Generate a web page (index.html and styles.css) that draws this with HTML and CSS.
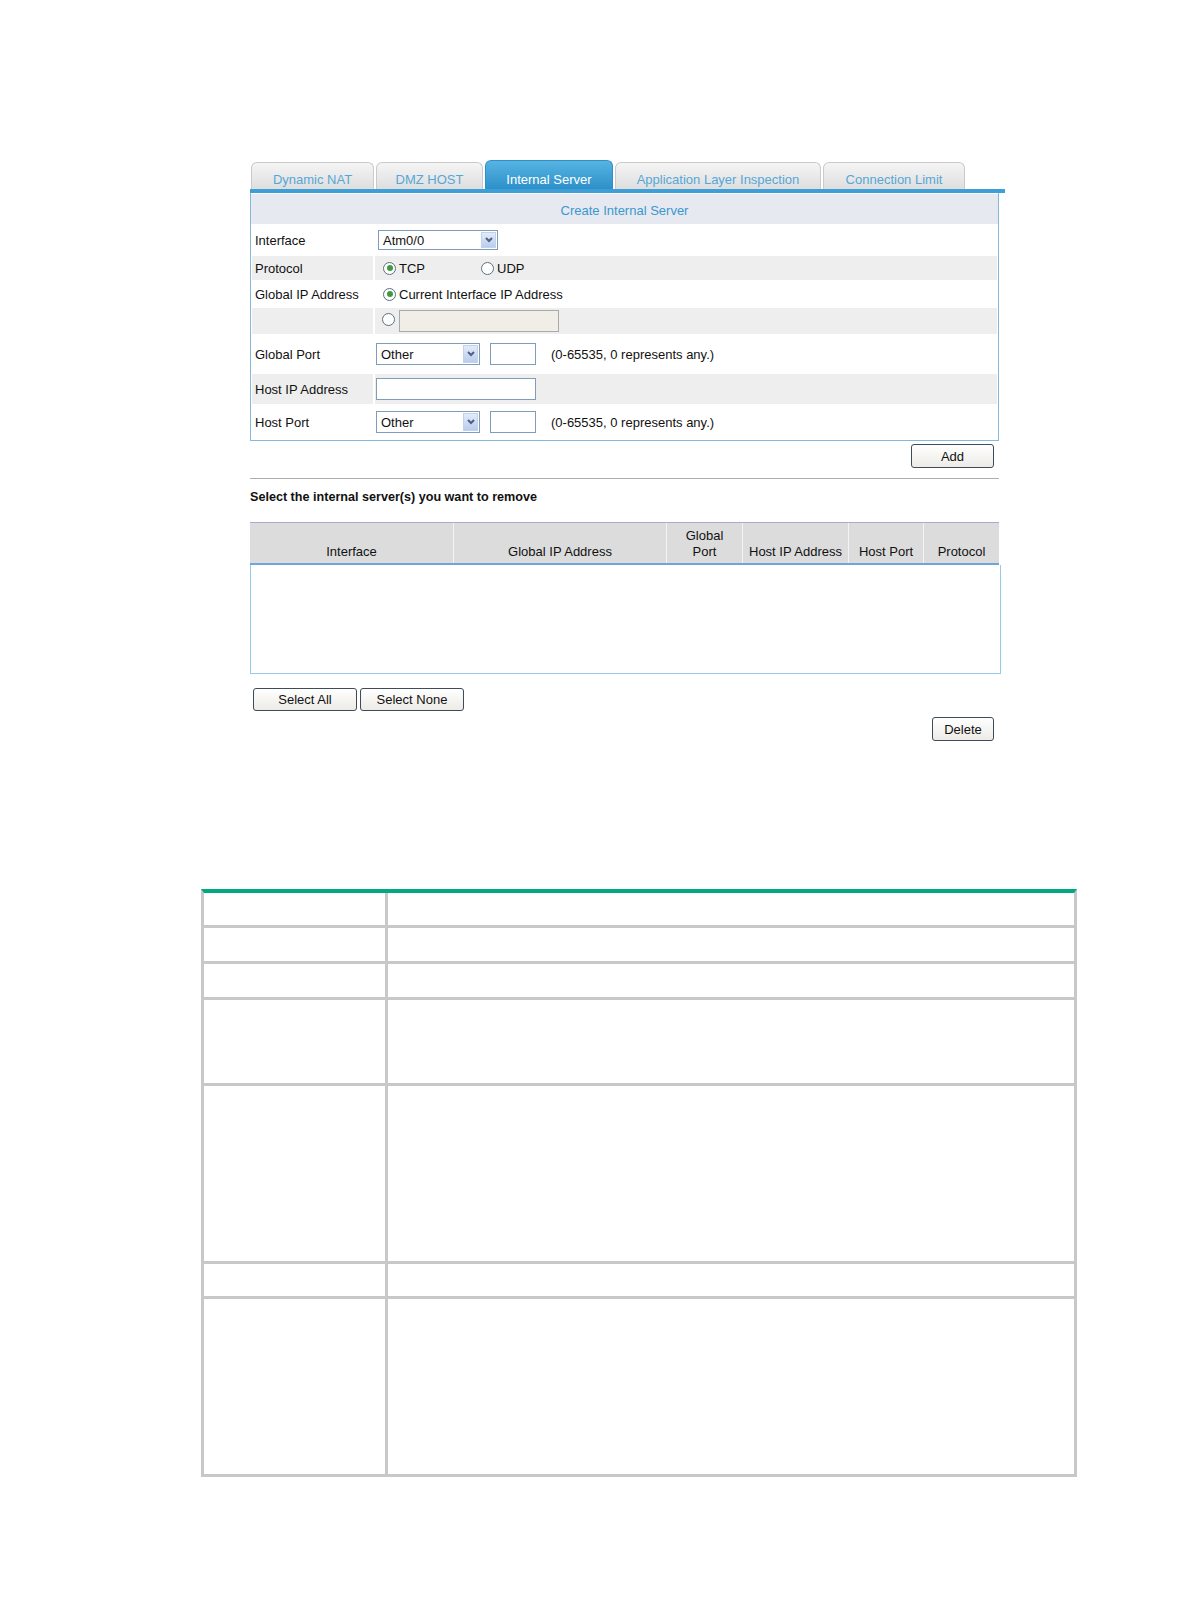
FILE: index.html
```html
<!DOCTYPE html>
<html lang="en">
<head>
    <meta charset="UTF-8">
    <title>Internal Server</title>
    <link rel="stylesheet" href="styles.css">
</head>
<body>
    <div class="nat">
        <div class="tabs">
            <div class="tab t1">Dynamic NAT</div>
            <div class="tab t2">DMZ HOST</div>
            <div class="tab t3 active">Internal Server</div>
            <div class="tab t4">Application Layer Inspection</div>
            <div class="tab t5">Connection Limit</div>
        </div>

        <div class="panel">
            <div class="panel-title">Create Internal Server</div>
            <div class="form">
                <div class="lbl">Interface</div>
                <div class="val">
                    <span class="select sel-if">Atm0/0<i class="arrow"><svg viewBox="0 0 8 6" width="8" height="6"><polyline points="1,1 4,4 7,1" /></svg></i></span>
                </div>

                <div class="lbl alt">Protocol</div>
                <div class="val alt">
                    <span class="opt proto"><span class="radio on"></span>TCP</span>
                    <span class="opt"><span class="radio"></span>UDP</span>
                </div>

                <div class="lbl">Global IP Address</div>
                <div class="val">
                    <span class="opt current"><span class="radio on"></span>Current Interface IP Address</span>
                </div>

                <div class="lbl alt"></div>
                <div class="val alt">
                    <span class="opt other"><span class="radio"></span><span class="field disabled"></span></span>
                </div>

                <div class="lbl">Global Port</div>
                <div class="val">
                    <span class="select sel-port">Other<i class="arrow"><svg viewBox="0 0 8 6" width="8" height="6"><polyline points="1,1 4,4 7,1" /></svg></i></span>
                    <span class="field port"></span>
                    <span class="hint">(0-65535, 0 represents any.)</span>
                </div>

                <div class="lbl alt">Host IP Address</div>
                <div class="val alt">
                    <span class="field host"></span>
                </div>

                <div class="lbl">Host Port</div>
                <div class="val">
                    <span class="select sel-port">Other<i class="arrow"><svg viewBox="0 0 8 6" width="8" height="6"><polyline points="1,1 4,4 7,1" /></svg></i></span>
                    <span class="field port"></span>
                    <span class="hint">(0-65535, 0 represents any.)</span>
                </div>
            </div>
        </div>

        <div class="actions">
            <button class="btn add">Add</button>
        </div>

        <div class="divider"></div>
        <div class="caption">Select the internal server(s) you want to remove</div>

        <div class="list-head">
            <div class="col c1">Interface</div>
            <div class="col c2">Global IP Address</div>
            <div class="col c3">Global<br>Port</div>
            <div class="col c4">Host IP Address</div>
            <div class="col c5">Host Port</div>
            <div class="col c6">Protocol</div>
        </div>
        <div class="list-body"></div>

        <div class="select-btns">
            <button class="btn wide">Select All</button>
            <button class="btn wide">Select None</button>
        </div>

        <div class="actions delete-row">
            <button class="btn del">Delete</button>
        </div>
    </div>

    <div class="spec">
        <div class="cell key r1"></div><div class="cell r1"></div>
        <div class="cell key r2"></div><div class="cell r2"></div>
        <div class="cell key r2"></div><div class="cell r2"></div>
        <div class="cell key r4"></div><div class="cell r4"></div>
        <div class="cell key r5"></div><div class="cell r5"></div>
        <div class="cell key r1"></div><div class="cell r1"></div>
        <div class="cell key r5"></div><div class="cell r5"></div>
    </div>
</body>
</html>
```

FILE: styles.css
```css
body {
    margin: 0;
    background: #fff;
    font-family: "Liberation Sans", Arial, sans-serif;
    font-size: 13px;
    color: #111;
}

.nat {
    margin: 160px 0 0 250px;
    width: 755px;
}

/* tabs */

.tabs {
    display: flex;
    align-items: flex-end;
    gap: 2px;
    height: 29px;
    padding-left: 1px;
    border-bottom: 4px solid #3d9fd6;
}

.tab {
    height: 26px;
    line-height: 34px;
    text-align: center;
    color: #55a7d9;
    background: linear-gradient(#f5f5f5, #dedede);
    border: 1px solid #cacaca;
    border-bottom: none;
    border-radius: 6px 6px 0 0;
    overflow: hidden;
}

.tab.active {
    height: 28px;
    line-height: 38px;
    color: #fff;
    background: linear-gradient(#56b4e2, #2d90c9);
    border-color: #2f8fc6;
}

.t1 { width: 121px; }
.t2 { width: 105px; }
.t3 { width: 126px; }
.t4 { width: 204px; }
.t5 { width: 140px; }

/* create panel */

.panel {
    width: 747px;
    padding-top: 1px;
    border: 1px solid #86b8da;
    border-top: none;
}

.panel-title {
    height: 30px;
    line-height: 34px;
    text-align: center;
    color: #3b98cf;
    background: #e6e9ef;
    overflow: hidden;
}

.form {
    display: grid;
    grid-template-columns: 121px 1fr;
    grid-template-rows: 32px 24px 28px 26px 40px 30px 36px;
    column-gap: 2px;
    padding: 0 1px;
}

.lbl,
.val {
    display: flex;
    align-items: center;
}

.lbl {
    padding-left: 3px;
}

.val {
    padding-left: 1px;
}

.alt {
    background: #eeeeee;
}

.opt {
    display: inline-flex;
    align-items: center;
    gap: 3px;
    white-space: nowrap;
}

.opt.proto {
    width: 98px;
    margin-left: 7px;
}

.opt.current {
    margin-left: 7px;
}

.opt.other {
    margin-left: 6px;
    gap: 4px;
}

.opt.other .radio {
    margin-bottom: 3px;
}

.radio {
    flex-shrink: 0;
    width: 11px;
    height: 11px;
    border: 1px solid #5d6f80;
    border-radius: 50%;
    background: #fff;
    position: relative;
}

.radio.on::after {
    content: "";
    position: absolute;
    left: 2.5px;
    top: 2.5px;
    width: 6px;
    height: 6px;
    border-radius: 50%;
    background: #3f9a3f;
}

.select {
    position: relative;
    display: inline-block;
    height: 20px;
    line-height: 20px;
    padding-left: 4px;
    border: 1px solid #7f9db9;
    background: #fff;
    box-sizing: border-box;
}

.sel-if {
    width: 120px;
    margin-left: 2px;
}

.sel-port {
    width: 104px;
    height: 22px;
    line-height: 22px;
}

.arrow {
    position: absolute;
    right: 1px;
    top: 1px;
    bottom: 1px;
    width: 15px;
    display: flex;
    align-items: center;
    justify-content: center;
    background: linear-gradient(#e3ebf8, #b9cdee);
    border: 1px solid #c2d2ee;
    box-sizing: border-box;
}

.arrow svg {
    fill: none;
    stroke: #4d6185;
    stroke-width: 2;
}

.field {
    display: inline-block;
    height: 22px;
    border: 1px solid #7f9db9;
    background: #fff;
    box-sizing: border-box;
}

.field.disabled {
    width: 160px;
    height: 22px;
    border-color: #a9a9a9;
    background: #f0eee6;
}

.field.port {
    width: 46px;
    margin-left: 10px;
}

.field.host {
    width: 160px;
}

.hint {
    margin-left: 15px;
}

/* buttons */

.actions {
    display: flex;
    justify-content: flex-end;
    width: 744px;
    margin-top: 3px;
}

.btn {
    height: 24px;
    padding: 0;
    font-family: inherit;
    font-size: 13px;
    color: #111;
    background: linear-gradient(#ffffff, #ecebe6);
    border: 1px solid #3d4b5c;
    border-radius: 3px;
}

.btn.add {
    width: 83px;
}

.btn.del {
    width: 62px;
}

.btn.wide {
    width: 104px;
    height: 23px;
}

/* remove list */

.divider {
    width: 749px;
    margin-top: 10px;
    border-top: 1px solid #aeaeae;
}

.caption {
    margin-top: 10px;
    font-weight: bold;
    font-size: 12.6px;
    line-height: 16px;
}

.list-head {
    display: flex;
    width: 749px;
    height: 40px;
    margin-top: 17px;
    background: #dcdcdc;
    border-top: 1px solid #a9a9d6;
    border-bottom: 2px solid #6ea6da;
}

.col {
    display: flex;
    align-items: flex-end;
    justify-content: center;
    padding-bottom: 3px;
    text-align: center;
    line-height: 16px;
    border-left: 1px solid #f4f4f4;
    box-sizing: border-box;
}

.col.c1 { width: 203px; border-left: none; }
.col.c2 { width: 213px; }
.col.c3 { width: 76px; }
.col.c4 { width: 106px; }
.col.c5 { width: 75px; }
.col.c6 { width: 76px; }

.list-body {
    width: 749px;
    height: 108px;
    border: 1px solid #95cde8;
    border-top: none;
}

.select-btns {
    display: flex;
    gap: 3px;
    margin: 14px 0 0 3px;
}

.delete-row {
    margin-top: 6px;
}

/* parameter table */

.spec {
    display: grid;
    grid-template-columns: 184px 1fr;
    width: 870px;
    margin: 148px 0 0 201px;
    border-top: 4px solid #01a982;
    border-left: 3px solid #c8c8c8;
    border-right: 3px solid #c8c8c8;
}

.cell {
    border-bottom: 3px solid #c8c8c8;
    box-sizing: border-box;
}

.cell.key {
    border-right: 3px solid #c8c8c8;
}

.r1 { height: 35px; }
.r2 { height: 36px; }
.r4 { height: 86px; }
.r5 { height: 178px; }
```
